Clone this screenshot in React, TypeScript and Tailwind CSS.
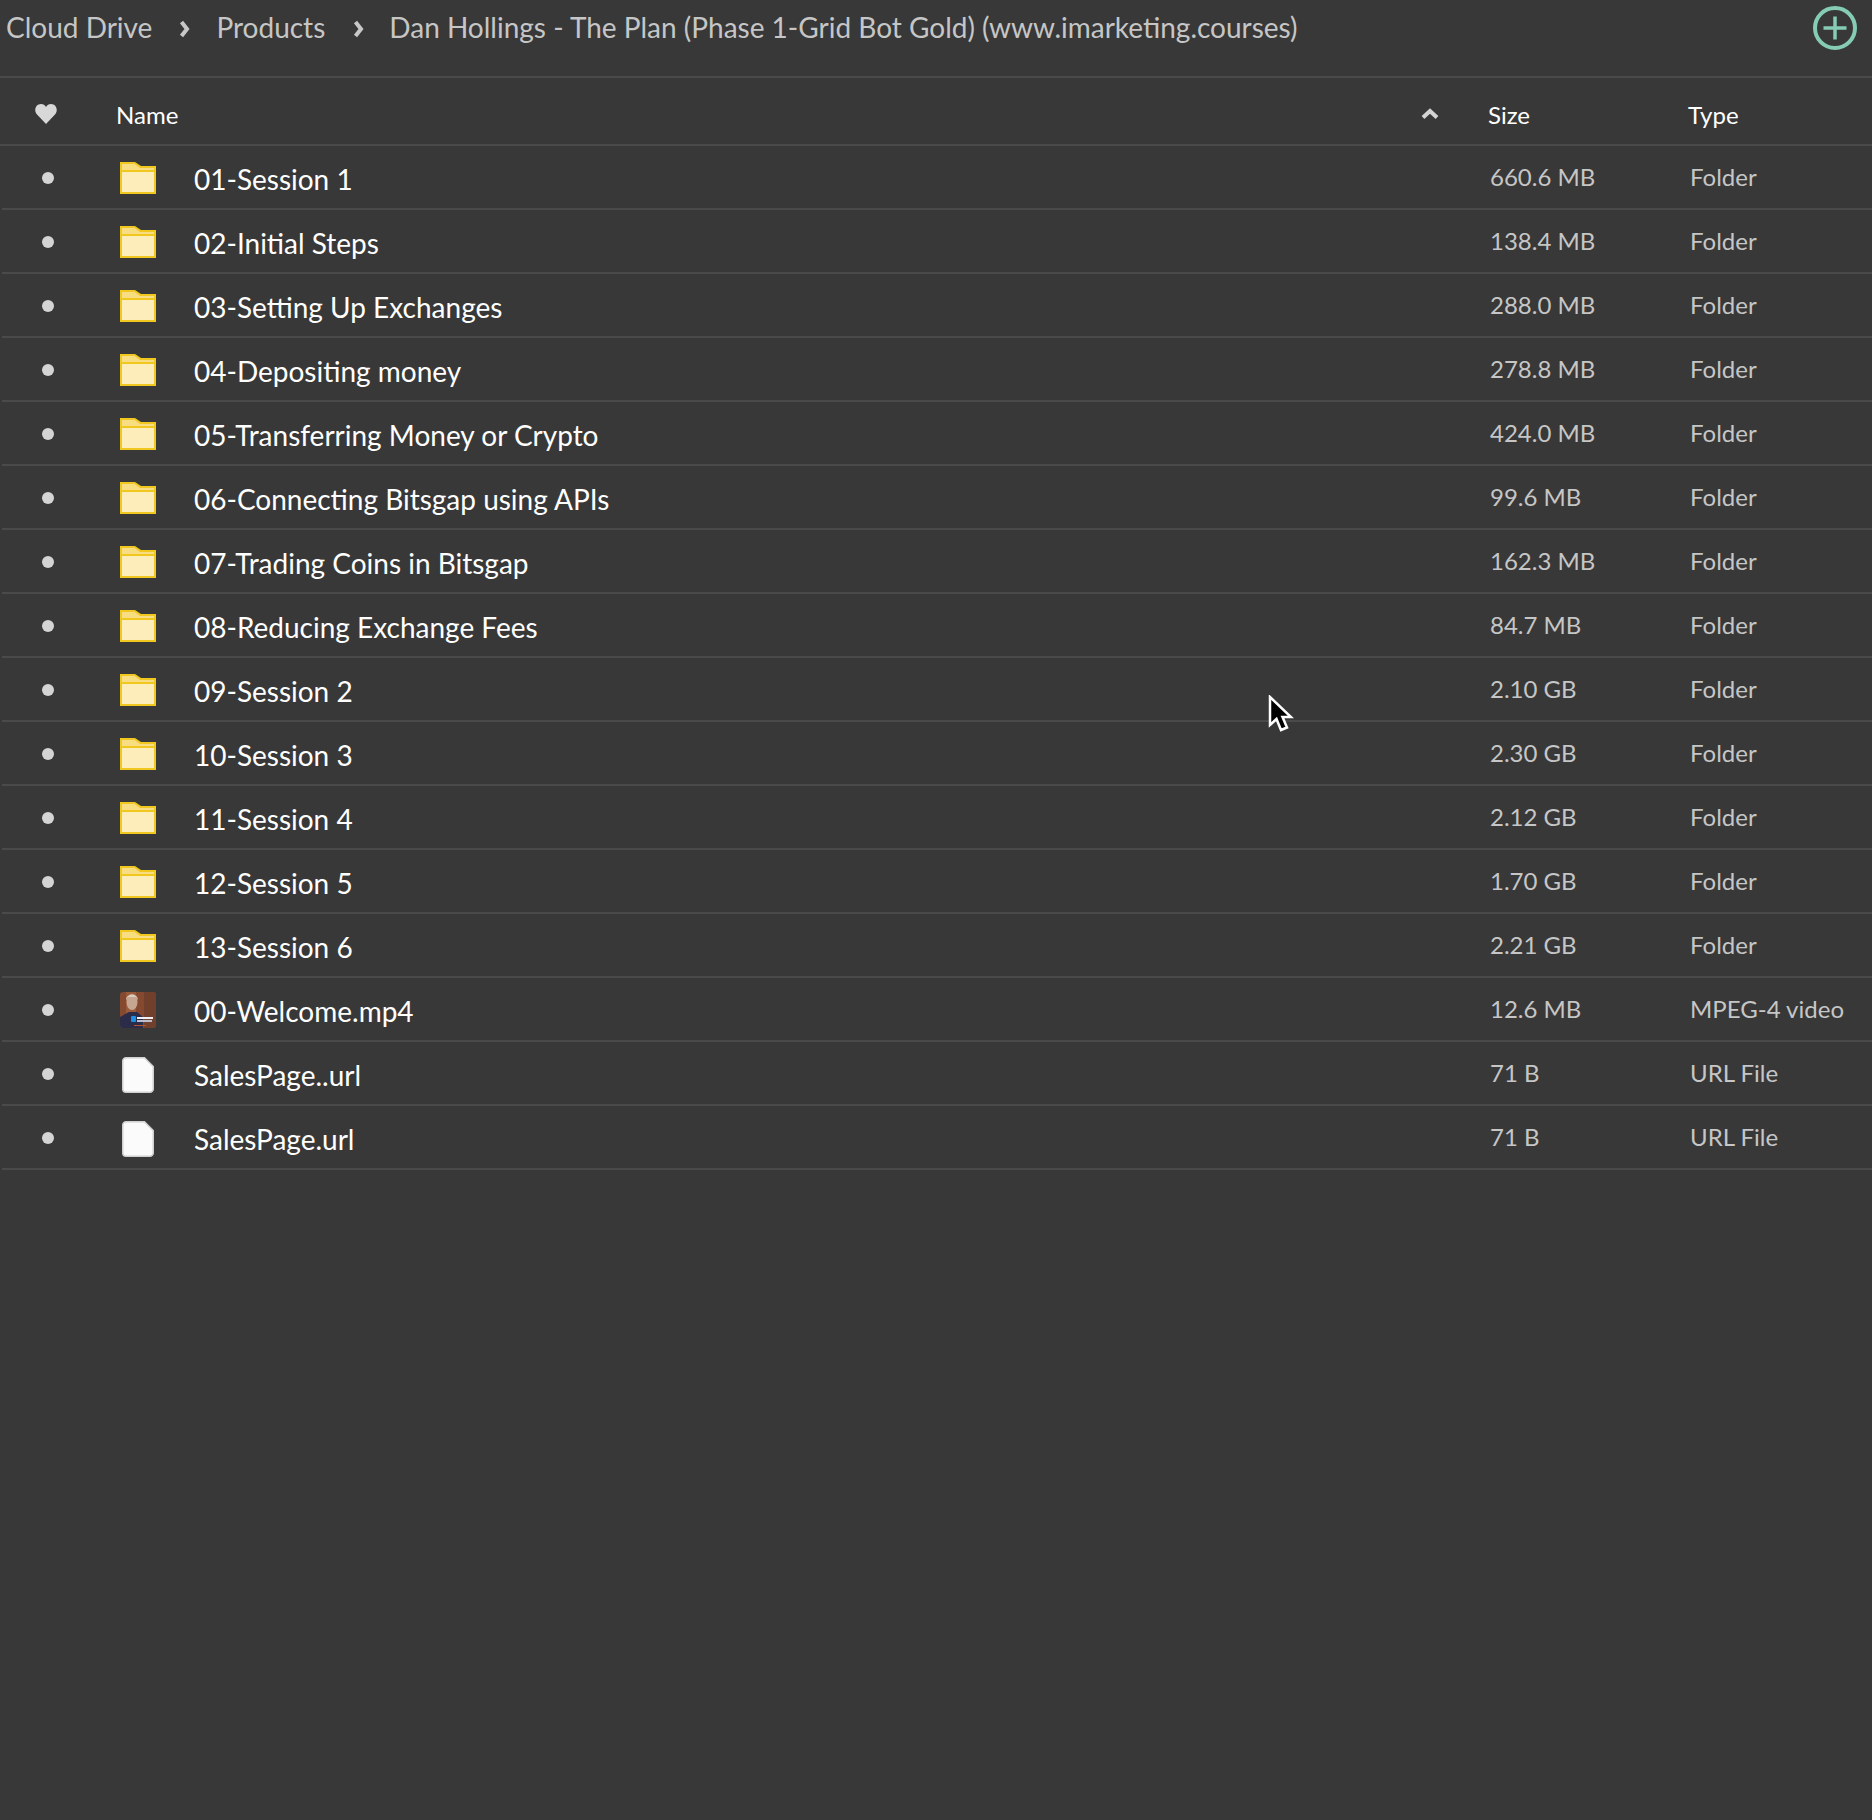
const rows: [string, string, string, string][] = [
  ["folder", "01-Session 1", "660.6 MB", "Folder"],
  ["folder", "02-Initial Steps", "138.4 MB", "Folder"],
  ["folder", "03-Setting Up Exchanges", "288.0 MB", "Folder"],
  ["folder", "04-Depositing money", "278.8 MB", "Folder"],
  ["folder", "05-Transferring Money or Crypto", "424.0 MB", "Folder"],
  ["folder", "06-Connecting Bitsgap using APIs", "99.6 MB", "Folder"],
  ["folder", "07-Trading Coins in Bitsgap", "162.3 MB", "Folder"],
  ["folder", "08-Reducing Exchange Fees", "84.7 MB", "Folder"],
  ["folder", "09-Session 2", "2.10 GB", "Folder"],
  ["folder", "10-Session 3", "2.30 GB", "Folder"],
  ["folder", "11-Session 4", "2.12 GB", "Folder"],
  ["folder", "12-Session 5", "1.70 GB", "Folder"],
  ["folder", "13-Session 6", "2.21 GB", "Folder"],
  ["video", "00-Welcome.mp4", "12.6 MB", "MPEG-4 video"],
  ["file", "SalesPage..url", "71 B", "URL File"],
  ["file", "SalesPage.url", "71 B", "URL File"],
];

function FolderIcon() {
  return (
    <svg width="36" height="32" viewBox="0 0 36 32" className="block">
      <path d="M0 0H15L21 4H36V32H0Z" fill="#f1c81f" />
      <path d="M2 2H14.5L20 6H34V8H2Z" fill="#f9dd83" />
      <rect x="2" y="10" width="32" height="20" fill="#fdedba" />
    </svg>
  );
}

function FileIcon() {
  return (
    <svg width="32" height="36" viewBox="0 0 32 36" className="block">
      <path d="M4 0.75H22.5L31.25 9.5V32A3.25 3.25 0 0 1 28 35.25H4A3.25 3.25 0 0 1 0.75 32V4A3.25 3.25 0 0 1 4 0.75Z" fill="#fbfbfb" stroke="#d0d0d0" strokeWidth="1.5" />
    </svg>
  );
}

function VideoThumb() {
  return (
    <svg width="36" height="36" viewBox="0 0 36 36" className="block">
      <clipPath id="thumb"><rect width="36" height="36" rx="3" /></clipPath>
      <g clipPath="url(#thumb)">
        <rect width="36" height="36" fill="#84492f" />
        <rect x="6" width="10" height="36" fill="#9a5a3c" />
        <rect x="24" width="12" height="36" fill="#70402c" />
        <path d="M0 36V25L9 20H17L23 25V36Z" fill="#2b2b4a" />
        <ellipse cx="12" cy="10" rx="5.5" ry="8" fill="#c6a690" />
        <path d="M6 8C6 1 18 1 18 8L16 5H8Z" fill="#d9cdc0" />
        <rect x="11" y="24" width="5" height="6" rx="1" fill="#1d8fe3" />
        <rect x="17" y="25" width="16" height="2" fill="#eef0f4" />
        <rect x="17" y="28" width="15" height="2" fill="#b9bfcc" />
        <rect x="14" y="33" width="12" height="1" fill="#b5532a" />
      </g>
    </svg>
  );
}

export default function App() {
  return (
    <div className="relative min-h-[1820px] w-[1872px] overflow-hidden bg-[#383838] font-['Lato',sans-serif]">
      <div className="flex h-[78px] items-start justify-between border-b-2 border-[#4a4a4a]">
        <div className="flex h-[54px] items-center pl-[6px] text-[28px] text-[#c6c6c6]">
          <span>Cloud Drive</span>
          <svg width="12" height="22" viewBox="0 0 12 22" className="ml-[27px] mr-[25px] mt-[3px]"><path d="M2.5 4L8 11L2.5 18" fill="none" stroke="#c8c8c8" strokeWidth="4" /></svg>
          <span>Products</span>
          <svg width="12" height="22" viewBox="0 0 12 22" className="ml-[28px] mr-[24px] mt-[3px]"><path d="M2.5 4L8 11L2.5 18" fill="none" stroke="#c8c8c8" strokeWidth="4" /></svg>
          <span>Dan Hollings - The Plan (Phase 1-Grid Bot Gold) (www.imarketing.courses)</span>
        </div>
        <svg width="46" height="46" viewBox="0 0 46 46" className="mr-[14px] mt-[5px]">
          <circle cx="23" cy="23" r="20" fill="none" stroke="#86ccb4" strokeWidth="4" />
          <path d="M23 11.5V34.5M11.5 23H34.5" stroke="#86ccb4" strokeWidth="3.5" />
        </svg>
      </div>

      <div className="flex h-[68px] items-center border-b-2 border-[#4a4a4a] text-[24px] text-white">
        <div className="flex w-[116px] shrink-0 pl-[35px]">
          <svg width="22" height="20" viewBox="0 0 22 20" className="mt-[5px]">
            <path d="M11 20L2 10.5C-1.5 6.5 0.5 0 6 0C8.2 0 10 1.2 11 3C12 1.2 13.8 0 16 0C21.5 0 23.5 6.5 20 10.5Z" fill="#d8d8d8" />
          </svg>
        </div>
        <span className="mt-[7px] w-[1305px] shrink-0">Name</span>
        <svg width="18" height="12" viewBox="0 0 18 12" className="mr-[49px] mt-[5px] shrink-0"><path d="M2 9.5L9 3L16 9.5" fill="none" stroke="#d4d4d4" strokeWidth="4" /></svg>
        <span className="mt-[7px] w-[200px] shrink-0">Size</span>
        <span className="mt-[7px]">Type</span>
      </div>

      {rows.map(([kind, name, size, type]) => (
        <div key={name} className="ml-[2px] flex h-[64px] items-center border-b-2 border-[#4a4a4a]">
          <div className="mt-[2px] flex w-[118px] shrink-0 pl-[40px]">
            <span className="block h-[12px] w-[12px] rounded-full bg-[#d4d4d4]" />
          </div>
          <div className="mt-[2px] flex w-[74px] shrink-0">
            {kind === "folder" && <FolderIcon />}
            {kind === "video" && <VideoThumb />}
            {kind === "file" && <div className="pl-[2px] pt-[2px]"><FileIcon /></div>}
          </div>
          <span className="mt-[3px] w-[1296px] shrink-0 text-[28px] text-white">{name}</span>
          <span className="-mt-[1px] w-[200px] shrink-0 text-[24px] text-[#c6c6c6]">{size}</span>
          <span className="-mt-[1px] whitespace-nowrap text-[24px] text-[#c6c6c6]">{type}</span>
        </div>
      ))}

      <svg width="26" height="38" viewBox="0 0 26 38" className="absolute left-[1268px] top-[695px]">
        <path d="M2 2V30L8.5 24L13 35L19 32.5L14.5 22H23Z" fill="#000" stroke="#fff" strokeWidth="2.5" />
      </svg>
    </div>
  );
}
